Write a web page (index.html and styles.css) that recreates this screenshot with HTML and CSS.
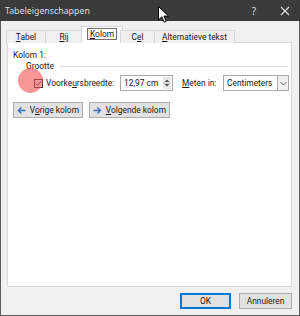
FILE: index.html
```html
<!DOCTYPE html>
<html lang="nl">
<head>
    <meta charset="UTF-8">
    <title>Tabeleigenschappen</title>
    <link rel="stylesheet" href="styles.css">
</head>
<body>
    <div class="window">
        <div class="titlebar">
            <span class="title">Tabeleigenschappen</span>
            <span class="title-buttons">
                <span class="help">?</span>
                <svg class="close" width="10" height="10" viewBox="0 0 10 10">
                    <path d="M1 1 L9 9 M9 1 L1 9" stroke="#e0e0e0" stroke-width="1.1"/>
                </svg>
            </span>
        </div>

        <div class="body">
            <div class="tabs">
                <div class="tab" style="width:40px"><u>T</u>abel</div>
                <div class="tab" style="width:38px"><u>R</u>ij</div>
                <div class="tab active"><span class="focus"><u>K</u>olom</span></div>
                <div class="tab" style="width:35px">C<u>e</u>l</div>
                <div class="tab" style="width:81px"><u>A</u>lternatieve tekst</div>
            </div>

            <div class="panel">
                <div class="heading">Kolom 1:</div>
                <div class="group">
                    <span class="group-label">Grootte</span>
                    <span class="group-line"></span>
                </div>

                <div class="size-row">
                    <span class="check">
                        <svg width="9" height="9" viewBox="0 0 9 9">
                            <rect x="0.5" y="0.5" width="8" height="8" fill="#fff" stroke="#333"/>
                            <path d="M1.8 4.6 L3.6 6.4 L7.2 2.2" fill="none" stroke="#333" stroke-width="1"/>
                        </svg>
                    </span>
                    <span class="label pref">Voorke<u>u</u>rsbreedte:</span>
                    <span class="spin">
                        <span class="spin-value">12,97 cm</span>
                        <span class="spin-buttons">
                            <svg width="8" height="12" viewBox="0 0 8 12">
                                <path d="M1.5 5 L4 2.5 L6.5 5 Z M1.5 7 L4 9.5 L6.5 7 Z" fill="#555"/>
                                <path d="M0 6 H8" stroke="#bbb" stroke-width="0.8"/>
                            </svg>
                        </span>
                    </span>
                    <span class="label meten"><u>M</u>eten in:</span>
                    <span class="select">
                        <span class="select-value">Centimeters</span>
                        <span class="select-arrow">
                            <svg width="7" height="5" viewBox="0 0 7 5">
                                <path d="M0.5 1 L3.5 4 L6.5 1" fill="none" stroke="#555" stroke-width="0.9"/>
                            </svg>
                        </span>
                    </span>
                </div>

                <div class="nav-row">
                    <button class="btn nav prev">
                        <svg width="10" height="9" viewBox="0 0 10 9">
                            <path d="M9.5 4.5 H2 M5 1 L1.5 4.5 L5 8" fill="none" stroke="#3470bd" stroke-width="1.5"/>
                        </svg>
                        <span>V<u>o</u>rige kolom</span>
                    </button>
                    <button class="btn nav next">
                        <svg width="10" height="9" viewBox="0 0 10 9">
                            <path d="M0.5 4.5 H8 M5 1 L8.5 4.5 L5 8" fill="none" stroke="#3470bd" stroke-width="1.5"/>
                        </svg>
                        <span><u>V</u>olgende kolom</span>
                    </button>
                </div>
            </div>

            <div class="footer">
                <button class="btn ok">OK</button>
                <button class="btn">Annuleren</button>
            </div>
        </div>

        <span class="click-dot"></span>
        <svg class="cursor" width="12" height="18" viewBox="0 0 12 18">
            <path d="M0.5 0.5 L0.5 14 L3.8 10.8 L6.2 16.2 L8.2 15.3 L5.9 10.1 L10.5 10.1 Z" fill="#fff" stroke="#000" stroke-width="1"/>
        </svg>
    </div>
</body>
</html>
```

FILE: styles.css
```css
body {
    margin: 0;
    font-family: Roboto, "Noto Sans", sans-serif;
    font-size: 8.4px;
    color: #1a1a1a;
    background-color: #f0f0f0;
    white-space: nowrap;
}

.window {
    position: relative;
    width: 300px;
    height: 316px;
    box-sizing: border-box;
    border: 1px solid #5b5b5b;
    border-top: none;
    background-color: #f0f0f0;
    display: flex;
    flex-direction: column;
}

.titlebar {
    height: 21px;
    flex-shrink: 0;
    background-color: #3b3b3b;
    color: #dcdcdc;
    display: flex;
    align-items: center;
    justify-content: space-between;
    padding: 0 10px 0 5px;
    margin: 0 -1px;
    font-family: "Noto Sans", sans-serif;
    font-size: 8.8px;
}

.title-buttons {
    display: flex;
    align-items: center;
    gap: 24px;
}

.help {
    font-size: 10px;
}

.close {
    display: block;
}

.body {
    flex: 1;
    display: flex;
    flex-direction: column;
    padding: 6px 5px 0 5px;
}

.tabs {
    display: flex;
    align-items: flex-end;
    height: 16px;
    position: relative;
    z-index: 1;
    margin-bottom: -1px;
}

.tab {
    height: 13px;
    line-height: 12px;
    box-sizing: border-box;
    border: 1px solid #d9d9d9;
    border-bottom: none;
    margin-left: -1px;
    text-align: center;
    background-color: #f0f0f0;
    flex-shrink: 0;
}

.tab:first-child {
    margin-left: 0;
}

.tab.active {
    height: 17px;
    line-height: 15px;
    background-color: #fff;
    margin-left: -2px;
    margin-right: -2px;
    width: 42px;
}

.focus {
    border: 1px solid #707070;
    padding: 0 2px;
}

.panel {
    height: 245px;
    flex-shrink: 0;
    box-sizing: border-box;
    background-color: #fff;
    border: 1px solid #d9d9d9;
    margin: 0 2px 0 1px;
    padding: 7px 5px 0 5px;
}

.heading {
    height: 10px;
    line-height: 10px;
}

.group {
    display: flex;
    align-items: center;
    padding-left: 13px;
    height: 12px;
}

.group-label {
    margin-right: 6px;
}

.group-line {
    flex: 1;
    border-top: 1px solid #dcdcdc;
    margin-right: -2px;
}

.size-row {
    display: flex;
    align-items: center;
    height: 18px;
    margin-top: 2px;
    padding-left: 21px;
}

.check {
    display: flex;
    margin-right: 1px;
}

.label {
    flex-shrink: 0;
    overflow: visible;
}

.label.pref {
    width: 76px;
    padding-left: 2px;
    box-sizing: border-box;
}

.label.meten {
    width: 41px;
    margin-left: 9px;
}

.spin {
    display: flex;
    align-items: center;
    flex-shrink: 0;
    width: 53px;
    height: 16px;
    box-sizing: border-box;
    border: 1px solid #a9a9a9;
    justify-content: space-between;
    padding: 0 1px 0 3px;
}

.spin-buttons {
    display: flex;
    background-color: #e8e8e8;
}

.select {
    display: flex;
    align-items: center;
    justify-content: space-between;
    flex-shrink: 0;
    width: 66px;
    height: 16px;
    box-sizing: border-box;
    border: 1px solid #a9a9a9;
    padding-left: 3px;
}

.select-arrow {
    width: 11px;
    height: 14px;
    box-sizing: border-box;
    border-left: 1px solid #a9a9a9;
    background-color: #f0f0f0;
    display: flex;
    align-items: center;
    justify-content: center;
}

.nav-row {
    display: flex;
    gap: 6px;
    margin-top: 10px;
}

.btn {
    font-family: inherit;
    font-size: inherit;
    color: #1a1a1a;
    height: 16px;
    box-sizing: border-box;
    border: 1px solid #adadad;
    background-color: #e1e1e1;
    padding: 0 5px;
    display: flex;
    align-items: center;
    gap: 4px;
    flex-shrink: 0;
    white-space: nowrap;
}

.nav {
    padding: 0 3px;
}

.prev {
    width: 70px;
}

.next {
    width: 81px;
}

.footer {
    display: flex;
    justify-content: flex-end;
    gap: 8px;
    padding: 6px 2px 0 0;
}

.footer .btn {
    width: 53px;
    height: 16px;
    justify-content: center;
}

.footer .ok {
    width: 51px;
    border: 1px solid #0078d7;
    box-shadow: inset 0 0 0 1px #0078d7;
}

.click-dot {
    position: absolute;
    left: 17px;
    top: 68px;
    width: 25px;
    height: 25px;
    border-radius: 50%;
    background-color: rgba(240, 80, 80, 0.6);
}

.cursor {
    position: absolute;
    left: 157px;
    top: 6px;
}
```
